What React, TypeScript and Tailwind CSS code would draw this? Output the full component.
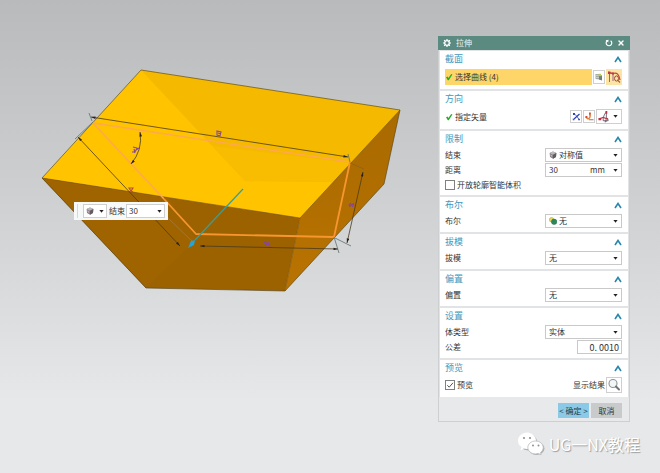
import type { ReactNode } from "react";
import { X } from "lucide-react";

function Caret() {
  return (
    <svg viewBox="0 0 5 3" className="pointer-events-none h-[3px] w-[5px] shrink-0" aria-hidden="true">
      <path d="M.4 0h4.2L2.500 2.800z" fill="#222" />
    </svg>
  );
}

function CubeIcon() {
  return (
    <svg viewBox="0 0 10 10" className="size-2 shrink-0" aria-hidden="true">
      <path d="M5 .5 9.2 2.6 8.7 7.4 5 9.6 1.3 7.4.8 2.6z" fill="#868185" />
      <path d="M5 .5 9.2 2.6 5 4.6.8 2.6z" fill="#bcb8bb" />
      <path d="M5 4.6 9.2 2.6 8.7 7.4 5 9.6z" fill="#625d61" />
      <path d="M1.8 4.2 4 5.3v2.2L2 6.4z" fill="#c9b2b6" />
    </svg>
  );
}

function BooleanIcon() {
  return (
    <svg viewBox="0 0 10 10" className="size-2 shrink-0" aria-hidden="true">
      <circle cx="3.2" cy="3.4" r="2.8" fill="#e2d85a" stroke="#9a983a" strokeWidth=".6" />
      <circle cx="6.4" cy="6" r="3.4" fill="#2b8c55" stroke="#1c6643" strokeWidth=".6" />
      <path d="M4.2 4.4 6 4l1 2-1.6 1z" fill="#2f6ea0" />
    </svg>
  );
}

function GearIcon() {
  return (
    <svg viewBox="0 0 16 16" className="size-2" aria-hidden="true">
      <circle cx="8" cy="8" r="4.6" fill="none" stroke="#fff" strokeWidth="2.6" />
      <path
        d="M8 0v3M8 13v3M0 8h3M13 8h3M2.300 2.300l2.200 2.200M11.500 11.500l2.200 2.200M2.300 13.700l2.200-2.200M11.500 4.500l2.200-2.200"
        stroke="#fff"
        strokeWidth="2.4"
      />
    </svg>
  );
}

type SelectProps = { id: string; label: string; options: string[]; icon?: ReactNode };

function SelectBox({ id, label, options, icon }: SelectProps) {
  return (
    <div className="relative flex h-[14px] w-[77px] items-center gap-[2px] border border-[#c9c9c9] bg-white px-[3px]">
      {icon}
      <select id={id} aria-label={label} className="h-3 min-w-0 flex-1 appearance-none bg-transparent leading-3 outline-none">
        {options.map((o) => (
          <option key={o}>{o}</option>
        ))}
      </select>
      <Caret />
    </div>
  );
}

function Section({ title, children }: { title: string; children: ReactNode }) {
  return (
    <section className="bg-white pr-[6px] pb-1 pl-[5px]">
      <h2 className="text-[9px] leading-4 text-[#4397bb]">
        <button type="button" className="flex h-4 w-full items-center justify-between">
          {title}
          <svg viewBox="0 0 8 7" className="h-[7px] w-2" aria-hidden="true">
            <path d="M1 6 4 1.500 7 6" fill="none" stroke="#2787ae" strokeWidth="1.6" />
          </svg>
        </button>
      </h2>
      <div className="flex flex-col gap-px pt-px">{children}</div>
    </section>
  );
}

function Row({ id, label, children }: { id: string; label: string; children: ReactNode }) {
  return (
    <div className="flex h-[14px] items-center justify-between">
      <label htmlFor={id}>{label}</label>
      {children}
    </div>
  );
}

function CheckBox({ id, label, checked }: { id: string; label: string; checked?: boolean }) {
  return (
    <div className="flex items-center gap-[2px]">
      <div className="relative size-[10px]">
        <input
          id={id}
          type="checkbox"
          defaultChecked={checked}
          className="peer block size-[10px] appearance-none border border-[#808080] bg-white"
        />
        <svg viewBox="0 0 10 10" className="pointer-events-none absolute inset-0 hidden size-[10px] peer-checked:block" aria-hidden="true">
          <path d="M2.3 5.2 4.2 7.2 8 2.8" fill="none" stroke="#555" strokeWidth="1" />
        </svg>
      </div>
      <label htmlFor={id}>{label}</label>
    </div>
  );
}

function Tick() {
  return (
    <svg viewBox="0 0 8 8" className="size-2" aria-hidden="true">
      <path d="M1 4.200 2.600 3.600 3.400 5 6.200 1 7.400 1.600 3.800 7.200 2.800 7.200z" fill="#21b02a" />
    </svg>
  );
}

function Model() {
  return (
    <svg width="420" height="310" viewBox="0 0 420 310" className="block" role="img" aria-label="拉伸实体">
      <defs>
        <marker id="arrow" viewBox="0 0 6 4" refX="6" refY="2" markerWidth="5" markerHeight="3" markerUnits="userSpaceOnUse" orient="auto-start-reverse">
          <path d="M0 .3 6 2 0 3.7z" fill="#2c2118" />
        </marker>
        <linearGradient id="side" x1="0" y1="0" x2="0" y2="1">
          <stop offset="0" stopColor="#a96a00" />
          <stop offset="1" stopColor="#b97300" />
        </linearGradient>
      </defs>
      <path d="M141 70 400 110 300 218 42 178z" fill="#ffc300" />
      <path d="M141 70 400 110 333 182 245 181z" fill="#f5b900" />
      <path d="M213 146 245 181 333 182 350 163z" fill="#f8bc00" />
      <path d="M42 178 300 218 285 291 146 288z" fill="#9c6200" />
      <path d="M42 178 169 198 196 240 146 288z" fill="#9f6400" />
      <path d="M300 218 400 110 384 184 285 291z" fill="url(#side)" />
      <g fill="none" stroke="#54431c" strokeWidth=".8">
        <path d="M42 178 141 70 400 110 384 184 285 291 146 288 42 178" strokeOpacity=".8" />
        <path d="M42 178 300 218 400 110M300 218 285 291" stroke="#7a5208" strokeWidth=".6" />
      </g>

      <g fill="none" strokeLinejoin="round">
        <path d="M350 162 93 123 164 199" stroke="#ffa850" strokeWidth="1.5" />
        <path d="M164 199 196 234 334 237 350 162" stroke="#f7952f" strokeWidth="1.8" />
      </g>

      <g fill="none" stroke="#4a3b20" strokeWidth=".8">
        <path d="M91 117 348 157" markerStart="url(#arrow)" markerEnd="url(#arrow)" />
        <path d="M78 137 180 246" markerStart="url(#arrow)" markerEnd="url(#arrow)" />
        <path d="M140 132Q143 150 131 164" markerStart="url(#arrow)" markerEnd="url(#arrow)" />
        <path d="M200 246 338 249" markerStart="url(#arrow)" markerEnd="url(#arrow)" />
        <path d="M363 172 347 243" markerStart="url(#arrow)" markerEnd="url(#arrow)" />
      </g>
      <g fill="none" stroke="#4e6366" strokeWidth=".7">
        <path d="M89 113 92 121M75 139 93 122M348 154 350 162M334 237 339 253M335 238 351 246" />
        <path d="M350 163 364 169" stroke="#85611f" />
        <path d="M168 218 194 243" stroke="#a77b4c" />
      </g>

      <g fill="none" stroke="#8546a0" strokeWidth="1.1">
        <path d="M217 131 221 132 220 136 217 135zM218 133 221 134" />
        <path d="M133 147 137 148 135 152 132 152M136 150 139 148M134 149 135 153" />
        <path d="M264 242 267 245 270 244M266 241 266 246M268 242 270 247M265 245 269 243" />
        <path d="M349 206 354 204M350 203 353 207M349 204 350 207M353 203 354 206" />
        <path d="M129 188 133 188 131 191zM131 191 133 192" stroke="#ba4a3c" />
      </g>

      <path d="M243 189 195 240" stroke="#3a9d9d" strokeWidth="1.2" />
      <path d="M188 248 191 241 195 240 194 245z" fill="#1da6df" />
    </svg>
  );
}

function ValueToolbar() {
  return (
    <div className="absolute top-[202px] left-[74px] flex h-[18px] w-[94px] items-center bg-[#f7f8f8] px-[3px] text-[8px] leading-3 text-[#333]">
      <span className="h-[14px] w-px bg-[#d8d8d8]" />
      <button type="button" aria-label="限制类型" className="ml-[5px] flex h-[14px] w-[24px] items-center justify-between border border-[#cfcfcf] bg-white px-[2px]">
        <CubeIcon />
        <Caret />
      </button>
      <label htmlFor="quick-end" className="ml-[2px] shrink-0">结束</label>
      <div className="ml-px flex h-[14px] min-w-0 flex-1 items-center border border-[#cfcfcf] bg-white px-[2px]">
        <input id="quick-end" defaultValue="30" className="h-3 w-0 min-w-0 flex-1 bg-transparent outline-none" />
        <button type="button" aria-label="更多选项">
          <Caret />
        </button>
      </div>
    </div>
  );
}

function ExtrudeDialog() {
  return (
    <form
      className="w-48 border border-[#cdcfd0] bg-[#e8e9ea] text-[8px] leading-3 text-[#333]"
      onSubmit={(e) => e.preventDefault()}
    >
      <header className="-mx-px -mt-px flex h-[14px] items-center bg-[#5b8a80] px-[5px] text-[#eef5f3]">
        <GearIcon />
        <h1 className="ml-[5px] flex-1">拉伸</h1>
        <button type="button" aria-label="重置" className="mr-1">
          <svg viewBox="0 0 8 8" className="size-2" aria-hidden="true">
            <path d="M2.200 1.800A2.800 2.800 0 1 0 5.600 1.700" fill="none" stroke="#fff" strokeWidth="1.2" />
            <path d="M.6 1.200 3.600.8 3.200 3.600z" fill="#fff" />
          </svg>
        </button>
        <button type="button" aria-label="关闭">
          <X className="size-2 text-white" strokeWidth={4} />
        </button>
      </header>

      <div className="flex flex-col gap-[2px] bg-[#e2e3e4] px-px pt-px">
        <Section title="截面">
          <div className="flex h-[17px] items-center gap-px">
            <div className="flex h-4 flex-1 items-center gap-[2px] bg-[#fdd568]">
              <Tick />
              <span>选择曲线 (4)</span>
            </div>
            <button type="button" aria-label="绘制截面" className="flex h-[14px] w-3 items-center justify-center border border-[#cfcfcf] bg-white">
              <svg viewBox="0 0 8 8" className="size-2" aria-hidden="true">
                <path d="M.5 1H5v5.500L.5 6z" fill="#a3aaa8" />
                <path d="M1 2.500h3M1 4.500h3" stroke="#d9dddc" strokeWidth=".7" />
                <path d="M4 2l3 .5v5l-3-1z" fill="#6d8074" />
                <path d="M3.500.8h2.500v2.400H3.500z" fill="#b8c85a" />
              </svg>
            </button>
            <button type="button" aria-label="曲线" className="flex size-4 items-center justify-center bg-[#fde3a4]">
              <svg viewBox="0 0 14 14" className="size-[14px]" fill="none" aria-hidden="true">
                <path d="M2.500 3v9M6 4v7" stroke="#8d6a85" />
                <path d="M1 2.500 6 3.500c4-1.500 6 1 7 6.500" stroke="#cc4038" strokeWidth="1.3" />
                <ellipse cx="9.500" cy="8.500" rx="2" ry="2.600" stroke="#a7433e" />
                <path d="M10.500 10 13 12.500" stroke="#9c6b37" strokeWidth="1.300" />
                <path d="M1 1.500h2.400v2.400H1zM5 2.400h2v2H5z" fill="#b53b48" />
              </svg>
            </button>
          </div>
        </Section>

        <Section title="方向">
          <div className="flex h-[17px] items-center gap-px">
            <div className="flex flex-1 items-center gap-[2px]">
              <Tick />
              <span>指定矢量</span>
            </div>
            <button type="button" aria-label="反向" className="flex h-[13px] w-3 items-center justify-center border border-[#cfcfcf] bg-white">
              <svg viewBox="0 0 9 9" className="size-[9px]" fill="none" aria-hidden="true">
                <path d="M2 1.500 5 4.500 7 7.500" stroke="#5d6cb8" />
                <path d="M1.500 7.500 7.500 2" stroke="#2b3fb4" strokeWidth="1.200" />
                <path d="M1 1h2v2H1zM.8 6.500v1.700h1.700zM6.200 6.800h1.700v1.500H6.200z" fill="#3444b0" />
              </svg>
            </button>
            <button type="button" aria-label="矢量构造器" className="flex h-[13px] w-3 items-center justify-center border border-[#cfcfcf] bg-white">
              <svg viewBox="0 0 9 9" className="size-[9px]" fill="none" aria-hidden="true">
                <path d="M4.800 1.500c.5 2 0 4.500-1 5.200C3 7.200 2 6.500 1.200 5.200" stroke="#e2803a" strokeWidth="1.500" />
                <path d="M4 .5h1.800v2H4zM.4 4h2v2h-2z" fill="#d34b30" />
                <path d="M4 7.700h4.500" stroke="#b08a78" strokeWidth="1.200" />
              </svg>
            </button>
            <button type="button" aria-label="矢量类型" className="flex h-[15px] w-[26px] items-center justify-between border border-[#cfcfcf] bg-white pr-[3px] pl-px">
              <svg viewBox="0 0 14 14" className="size-[13px]" fill="none" aria-hidden="true">
                <path d="M8.500 2.500C6.500 5 5.500 8 5.500 11.500h5.500l-1-3M9 2.500v7l-1.500 3.500 2.500-1.500" stroke="#6d6570" />
                <path d="M1.500 9.500 5.500 8 11 10" stroke="#be3447" strokeWidth="1.200" />
                <path d="M8 1h2v3H8zM.5 8.500h3V11H.5z" fill="#c52e42" />
              </svg>
              <Caret />
            </button>
          </div>
        </Section>

        <Section title="限制">
          <Row id="end" label="结束">
            <SelectBox id="end" label="结束" options={["对称值", "值"]} icon={<CubeIcon />} />
          </Row>
          <Row id="distance" label="距离">
            <div className="flex h-[14px] w-[77px] items-center border border-[#c9c9c9] bg-white px-[3px]">
              <input id="distance" defaultValue="30" className="h-3 w-0 min-w-0 flex-1 bg-transparent outline-none" />
              <select aria-label="单位" className="h-3 w-[23px] appearance-none bg-transparent leading-3 outline-none">
                <option>mm</option>
                <option>in</option>
              </select>
              <Caret />
            </div>
          </Row>
          <div className="flex h-[13px] items-center">
            <CheckBox id="open-profile" label="开放轮廓智能体积" />
          </div>
        </Section>

        <Section title="布尔">
          <Row id="boolean" label="布尔">
            <SelectBox id="boolean" label="布尔" options={["无", "求和"]} icon={<BooleanIcon />} />
          </Row>
        </Section>

        <Section title="拔模">
          <Row id="draft" label="拔模">
            <SelectBox id="draft" label="拔模" options={["无"]} />
          </Row>
        </Section>

        <Section title="偏置">
          <Row id="offset" label="偏置">
            <SelectBox id="offset" label="偏置" options={["无"]} />
          </Row>
        </Section>

        <Section title="设置">
          <Row id="body-type" label="体类型">
            <SelectBox id="body-type" label="体类型" options={["实体", "片体"]} />
          </Row>
          <Row id="tolerance" label="公差">
            <input
              id="tolerance"
              defaultValue="0. 0010"
              className="h-[14px] w-[45px] border border-[#c9c9c9] bg-white px-[2px] text-right text-[9px] outline-none"
            />
          </Row>
        </Section>

        <Section title="预览">
          <div className="flex h-4 items-center justify-between">
            <CheckBox id="preview" label="预览" checked />
            <div className="flex items-center gap-px">
              <label htmlFor="show-result">显示结果</label>
              <button id="show-result" type="button" className="flex size-4 items-center justify-center border border-[#cfcfcf] bg-white">
                <svg viewBox="0 0 14 14" className="size-[14px]" fill="none" aria-hidden="true">
                  <circle cx="6" cy="5.500" r="4" fill="#f2f6f7" stroke="#8f9496" strokeWidth="1.100" />
                  <path d="M9 8.500 12 11.500" stroke="#707476" strokeWidth="2" strokeLinecap="round" />
                </svg>
              </button>
            </div>
          </div>
        </Section>
      </div>

      <footer className="flex justify-end gap-[2px] pt-[6px] pr-[7px] pb-[3px]">
        <button type="submit" className="h-[15px] w-[31px] bg-[#8bcae6] whitespace-nowrap text-[#1f3d4c]">&lt; 确定 &gt;</button>
        <button type="button" className="h-[15px] w-[31px] bg-[#c9cacb]">取消</button>
      </footer>
    </form>
  );
}

function Watermark() {
  return (
    <div className="flex items-center gap-1 text-base leading-6 text-white [text-shadow:1px_1px_1px_#9b9d9f]">
      <svg viewBox="0 0 28 24" className="h-6 w-7" aria-hidden="true">
        <g fill="#aeb0b2" transform="translate(1 1)">
          <ellipse cx="10" cy="9" rx="9" ry="8.500" />
          <ellipse cx="18.500" cy="15.500" rx="8" ry="6.500" />
        </g>
        <path d="M10 .5c5 0 9 3.700 9 8.300S15 17 10 17c-1.200 0-2.300-.1-3.300-.4L3.500 18.500l.8-3.200C2.200 13.800 1 11.500 1 8.800 1 4.200 5 .5 10 .5z" fill="#fff" />
        <path d="M18.500 9c4.300 0 7.700 2.900 7.700 6.500 0 2-1.100 3.700-2.700 4.900l.6 2.400-2.900-1.400c-1 .3-1.900.5-2.700.5-4.300 0-7.700-2.900-7.700-6.400S14.200 9 18.500 9z" fill="#fff" stroke="#b9bbbd" strokeWidth=".8" />
        <g fill="#8f9193">
          <circle cx="7" cy="6" r="1.100" />
          <circle cx="13" cy="6" r="1.100" />
          <circle cx="16" cy="13.500" r="1" />
          <circle cx="21.500" cy="13.500" r="1" />
        </g>
      </svg>
      <span>UG一NX教程</span>
    </div>
  );
}

export default function App() {
  return (
    <main
      lang="zh-CN"
      className="flex min-h-screen items-start justify-between bg-linear-to-b from-[#b9babc] via-[#d2d4d5] to-[#e6e8e9] to-85% font-['Noto_Sans_CJK_SC',sans-serif]"
    >
      <div className="relative shrink-0">
        <Model />
        <ValueToolbar />
      </div>
      <div className="flex shrink-0 flex-col items-end pt-9">
        <div className="pr-[30px]">
          <ExtrudeDialog />
        </div>
        <div className="pt-[10px] pr-5">
          <Watermark />
        </div>
      </div>
    </main>
  );
}
